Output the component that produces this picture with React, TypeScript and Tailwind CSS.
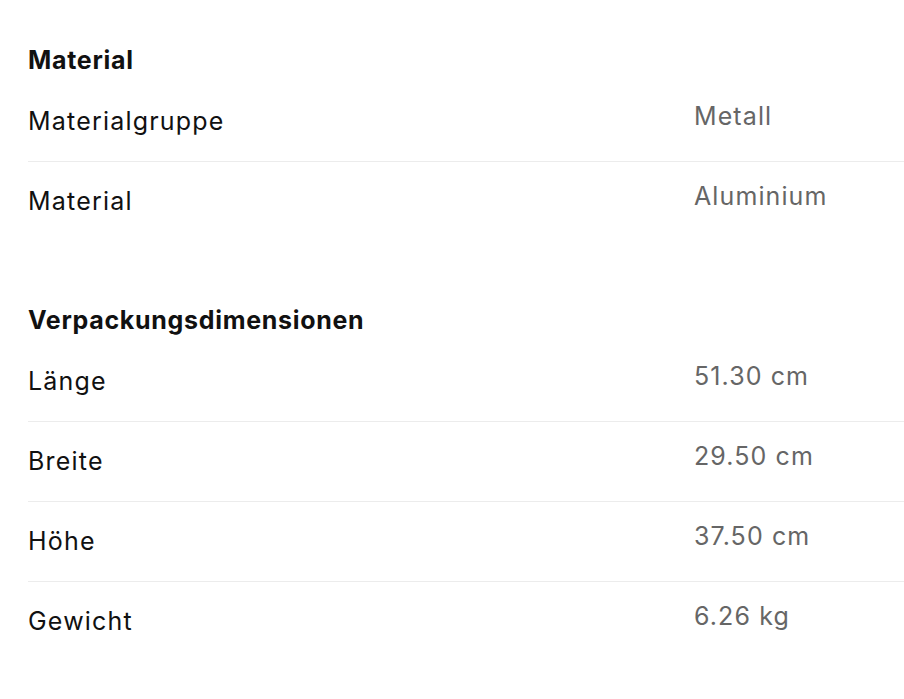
const sections = [
  {
    title: 'Material',
    rows: [
      { label: 'Materialgruppe', value: 'Metall' },
      { label: 'Material', value: 'Aluminium' },
    ],
  },
  {
    title: 'Verpackungsdimensionen',
    rows: [
      { label: 'Länge', value: '51.30 cm' },
      { label: 'Breite', value: '29.50 cm' },
      { label: 'Höhe', value: '37.50 cm' },
      { label: 'Gewicht', value: '6.26 kg' },
    ],
  },
]

export default function App() {
  return (
    <div
      className="min-h-screen w-[904px] bg-white pl-[28px] text-[#111]"
      style={{ fontFamily: 'Inter, Lato, sans-serif' }}
    >
      {sections.map((section, i) => (
        <section key={section.title} className={i === 0 ? 'pt-[44px]' : 'pt-[62px]'}>
          <h2 className="mb-[6px] h-[32px] text-[25px] leading-[32px] font-bold tracking-[0.7px]">
            {section.title}
          </h2>
          <div>
            {section.rows.map((row, j) => (
              <div
                key={row.label}
                className={
                  j < section.rows.length - 1
                    ? 'flex h-[80px] items-center border-b border-[#ececec]'
                    : 'flex h-[80px] items-center'
                }
              >
                <span className="w-[666px] text-[25px] tracking-[1.2px]">{row.label}</span>
                <span className="mb-[10px] text-[25px] tracking-[1.1px] text-[#666]">{row.value}</span>
              </div>
            ))}
          </div>
        </section>
      ))}
    </div>
  )
}
